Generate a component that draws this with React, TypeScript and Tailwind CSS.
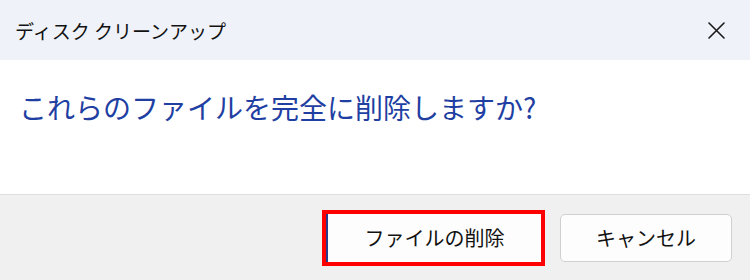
const font = { fontFamily: '"Noto Sans CJK JP", "Noto Sans", sans-serif' };

export default function App() {
  return (
    <div className="flex h-[280px] w-[750px] flex-col overflow-hidden bg-white" style={font}>
      <div className="flex h-[60px] items-center justify-between bg-[#eff3f9] pl-[15px] pr-[25px]">
        <span className="text-[19px] leading-none text-[#111]">ディスク クリーンアップ</span>
        <svg width="17" height="17" viewBox="0 0 17 17" className="text-[#1a1a1a]">
          <path d="M1 1L16 16M16 1L1 16" stroke="currentColor" strokeWidth="1.6" strokeLinecap="round" />
        </svg>
      </div>
      <div className="flex h-[134px] items-start bg-white pl-[19px] pt-[28px]">
        <h1 className="text-[28px] font-normal leading-[38px] text-[#1f3fa3]">
          これらのファイルを完全に削除しますか?
        </h1>
      </div>
      <div className="flex flex-1 items-center justify-end gap-[15px] border-t border-[#dedede] bg-[#f0f0f0] pr-[18px]">
        <div className="border-[4px] border-[#ff0000]">
          <button className="flex h-[48px] w-[215px] items-center justify-center border-l-2 border-[#2a3a8a] bg-[#fdfdfd] text-[20px] text-[#111]">
            ファイルの削除
          </button>
        </div>
        <button className="flex h-[48px] w-[172px] items-center justify-center rounded-[5px] border border-[#d0d0d0] bg-[#fdfdfd] text-[20px] text-[#111]">
          キャンセル
        </button>
      </div>
    </div>
  );
}
